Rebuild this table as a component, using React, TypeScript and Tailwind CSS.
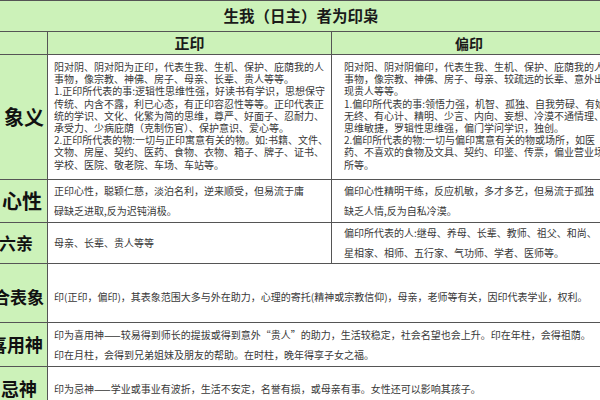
import React from "react";

const Lines = ({ lines, cls }: { lines: string[]; cls: string }) => (
  <div className={cls}>
    {lines.map((l, i) => (
      <div key={i} className="whitespace-nowrap">
        {l}
      </div>
    ))}
  </div>
);

export default function App() {
  const green = "bg-[#ccf2b9]";
  const bd = "border-[#555555]";
  return (
    <div className="w-[600px] h-[400px] overflow-hidden bg-white font-['Noto_Sans_CJK_SC','Noto_Sans',sans-serif] text-[#383838]">
      <div className="-ml-[12px] w-[624px] grid grid-cols-[60px_284px_280px]">
        {/* title */}
        <div className={`col-span-3 h-[32px] ${green} border-t border-b ${bd} flex items-center justify-center text-[15.5px] font-bold text-[#1a1a1a] pl-[2px]`}>
          生我（日主）者为印枭
        </div>
        {/* subheader */}
        <div className={`h-[23px] ${green} border-r border-b ${bd}`}></div>
        <div className={`h-[23px] ${green} border-r border-b ${bd} flex items-center justify-center text-[15px] font-bold text-[#1a1a1a]`}>
          正印
        </div>
        <div className={`h-[23px] ${green} border-b ${bd} flex items-center justify-center text-[14px] font-bold text-[#1a1a1a] pr-[6px]`}>
          偏印
        </div>

        {/* 象义 */}
        <div className={`h-[125px] ${green} border-r border-b ${bd} flex items-center justify-end pr-[3px] text-[20px] font-bold text-[#111] whitespace-nowrap`}>
          象义
        </div>
        <div className={`h-[125px] border-r border-b ${bd} pt-[6px] pl-[6px] overflow-hidden`}>
          <Lines
            cls="text-[10px] leading-[12.2px]"
            lines={[
              "阳对阴、阴对阳为正印，代表生我、生机、保护、庇荫我的人",
              "事物，像宗教、神佛、房子、母亲、长辈、贵人等等。",
              "1.正印所代表的事:逻辑性思维性强，好读书有学识，思想保守",
              "传统、内含不露，利已心态，有正印容忍性等等。正印代表正",
              "统的学识、文化、化繁为简的思维，尊严、好面子、忍耐力、",
              "承受力、少病庇荫（克制伤官）、保护意识、爱心等。",
              "2.正印所代表的物:一切与正印寓意有关的物。如:书籍、文件、",
              "文物、房屋、契约、医药、食物、衣物、箱子、牌子、证书、",
              "学校、医院、敬老院、车场、车站等。",
            ]}
          />
        </div>
        <div className={`h-[125px] border-b ${bd} pt-[6px] pl-[12px] overflow-hidden`}>
          <Lines
            cls="text-[10px] leading-[12.2px]"
            lines={[
              "阳对阳、阴对阴偏印，代表生我、生机、保护、庇荫我的人",
              "事物，像宗教、神佛、房子、母亲、较疏远的长辈、意外出",
              "现贵人等等。",
              "1.偏印所代表的事:领悟力强，机智、孤独、自我劳碌、有始",
              "无终、有心计、精明、少言、内向、妄想、冷漠不通情理、",
              "思维敏捷，罗辑性思维强，偏门学问学识，独创。",
              "2.偏印所代表的物:一切与偏印寓意有关的物或场所，如医",
              "药、不喜欢的食物及文具、契约、印鉴、传票，偏业营业场",
              "所等。",
            ]}
          />
        </div>

        {/* 心性 */}
        <div className={`h-[43px] ${green} border-r border-b ${bd} flex items-center justify-end pr-[5px] text-[20px] font-bold text-[#111] whitespace-nowrap`}>
          心性
        </div>
        <div className={`h-[43px] border-r border-b ${bd} pl-[6px] flex items-center overflow-hidden`}>
          <Lines
            cls="text-[10px] leading-[20px]"
            lines={["正印心性，聪颖仁慈，淡泊名利，逆来顺受，但易流于庸", "碌缺乏进取,反为迟钝消极。"]}
          />
        </div>
        <div className={`h-[43px] border-b ${bd} pl-[12px] flex items-center overflow-hidden`}>
          <Lines
            cls="text-[10px] leading-[20px]"
            lines={["偏印心性精明干练，反应机敏，多才多艺，但易流于孤独", "缺乏人情,反为自私冷漠。"]}
          />
        </div>

        {/* 六亲 */}
        <div className={`h-[41px] ${green} border-r border-b ${bd} flex items-center justify-end pr-[14px] text-[17px] font-bold text-[#111] whitespace-nowrap`}>
          六亲
        </div>
        <div className={`h-[41px] border-r border-b ${bd} pl-[6px] flex items-center overflow-hidden`}>
          <Lines cls="text-[10px] leading-[20px]" lines={["母亲、长辈、贵人等等"]} />
        </div>
        <div className={`h-[41px] border-b ${bd} pl-[12px] flex items-center overflow-hidden`}>
          <Lines
            cls="text-[10px] leading-[20px]"
            lines={["偏印所代表的人:继母、养母、长辈、教师、祖父、和尚、", "星相家、相师、五行家、气功师、学者、医师等。"]}
          />
        </div>

        {/* 综合表象 */}
        <div className={`h-[59px] ${green} border-r border-b ${bd} flex items-center justify-end pr-[3px] pt-[8px] text-[17px] font-bold text-[#111] whitespace-nowrap`}>
          综合表象
        </div>
        <div className={`col-span-2 h-[59px] border-b ${bd} pl-[6px] pt-[7px] flex items-center overflow-hidden`}>
          <Lines
            cls="text-[10px] leading-[20px]"
            lines={["印(正印，偏印)，其表象范围大多与外在助力，心理的寄托(精神或宗教信仰)，母亲，老师等有关，因印代表学业，权利。"]}
          />
        </div>

        {/* 喜用神 */}
        <div className={`h-[44px] ${green} border-r border-b ${bd} flex items-center justify-end pr-[4px] text-[18px] font-bold text-[#111] whitespace-nowrap`}>
          喜用神
        </div>
        <div className={`col-span-2 h-[44px] border-b ${bd} pl-[6px] flex items-center overflow-hidden`}>
          <Lines
            cls="text-[10px] leading-[20px]"
            lines={[
              "印为喜用神——较易得到师长的提拔或得到意外“贵人”的助力，生活较稳定，社会名望也会上升。印在年柱，会得祖荫。",
              "印在月柱，会得到兄弟姐妹及朋友的帮助。在时柱，晚年得享子女之福。",
            ]}
          />
        </div>

        {/* 忌神 */}
        <div className={`h-[44px] ${green} border-r border-b ${bd} flex items-center justify-end pr-[10px] text-[18px] font-bold text-[#111] whitespace-nowrap`}>
          忌神
        </div>
        <div className={`col-span-2 h-[44px] border-b ${bd} pl-[6px] flex items-center overflow-hidden`}>
          <Lines
            cls="text-[10px] leading-[20px]"
            lines={["印为忌神——学业或事业有波折，生活不安定，名誉有损，或母亲有事。女性还可以影响其孩子。"]}
          />
        </div>
      </div>
    </div>
  );
}
